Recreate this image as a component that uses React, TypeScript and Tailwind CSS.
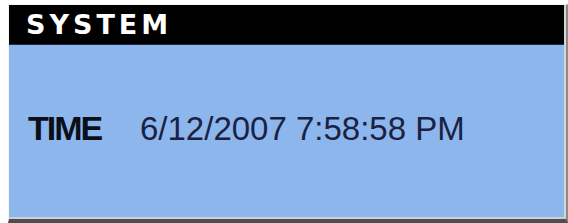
import React from "react";

export default function App() {
  return (
    <div className="w-[568px] h-[223px] bg-white pl-[8px] pt-[4px]">
      <div className="w-[560px] h-[219px] border-r-[2px] border-b-[4px] border-r-[#8a8a8a] border-b-[#4e4e4e] border-l border-t border-l-[#f4f4f4] border-t-[#f4f4f4]">
        <div className="h-full flex flex-col border-r-[2px] border-b-[2px] border-r-[#d4d4d4] border-b-[#cfcfcf] bg-[#8db6ec]">
          <div className="h-[40px] bg-black flex items-center pl-[17px] border-b border-b-[#1c2a48]">
            <span
              className="text-white font-bold text-[27px] tracking-[4px] leading-none"
              style={{ fontFamily: '"DejaVu Sans", Verdana, sans-serif' }}
            >
              SYSTEM
            </span>
          </div>
          <div className="flex items-baseline pl-[19px] pt-[66px]">
            <span
              className="font-bold text-[34px] leading-none text-[#0c0f1a] tracking-[-2px] w-[112px]"
              style={{ fontFamily: '"Liberation Sans", Arial, sans-serif' }}
            >
              TIME
            </span>
            <span
              className="text-[33px] leading-none text-[#1a2244]"
              style={{ fontFamily: '"Liberation Sans", Arial, sans-serif' }}
            >
              6/12/2007 7:58:58 PM
            </span>
          </div>
        </div>
      </div>
    </div>
  );
}
